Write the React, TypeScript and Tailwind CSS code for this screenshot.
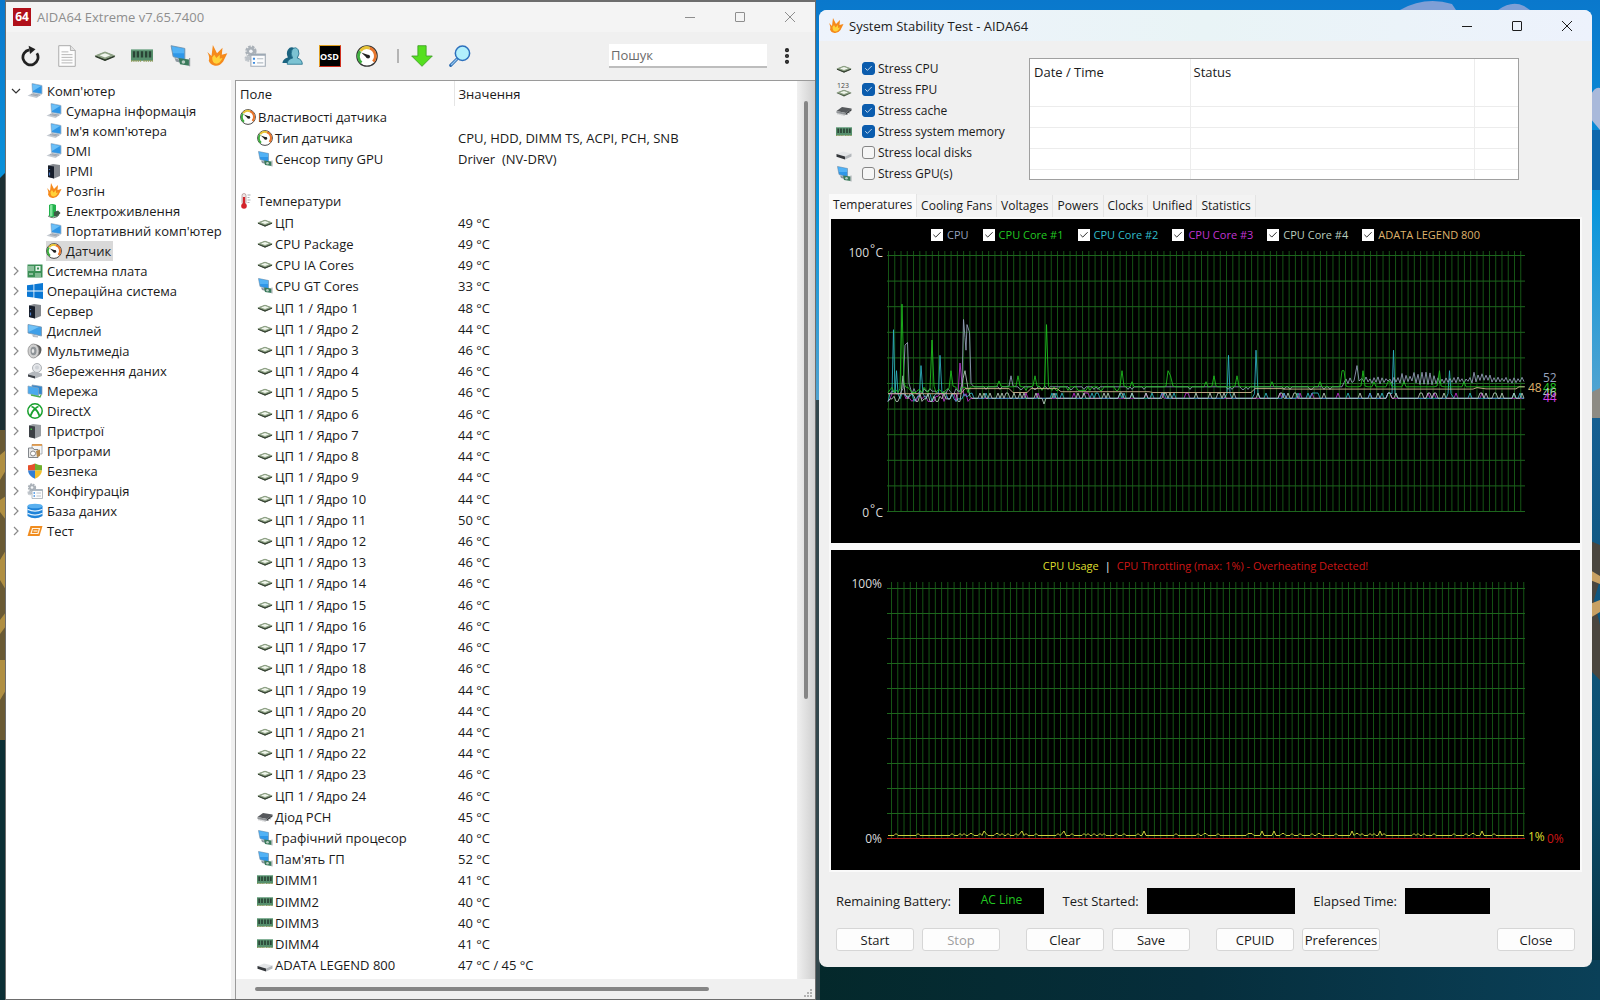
import React, {useState} from "react";
import {Check, MoreVertical} from "lucide-react";

type IconName =
    | 'laptop' | 'server' | 'flame' | 'battery' | 'gauge' | 'board' | 'windows' | 'display' | 'speaker'
    | 'storage' | 'network' | 'xbox' | 'tower' | 'programs' | 'shield' | 'config' | 'database' | 'bench'
    | 'gpu' | 'chip' | 'fpu' | 'pch' | 'ram' | 'drive' | 'thermo' | 'doc' | 'users' | 'update' | 'lens' | 'refresh';

const drawings: Record<IconName, React.ReactNode> = {
    laptop: (
        <>
            <path d="M5 0.500L15 2.500V11L5.500 9.500Z" fill="#2f96e6" stroke="#9fb4c8" strokeWidth="0.800"/>
            <path d="M5.500 1.200L14 3L6 8Z" fill="#6cc0f8"/>
            <path d="M5.500 10L15 11.500L9.500 15L0.500 12.800Z" fill="#c3c9d0"/>
            <path d="M4 11.500L11 13M6 10.800L13 12.200" stroke="#8f98a3" strokeWidth="0.700"/>
        </>
    ),
    server: (
        <>
            <path d="M2 2.500L7 1L14 2V13L8 15.500L2 14Z" fill="#85898f"/>
            <path d="M2 2.500L8 3.500V15.500L2 14Z" fill="#161d2a"/>
            <path d="M3.500 6v1M3.500 9.500v3" stroke="#4d7cc4" strokeWidth="1.200"/>
        </>
    ),
    flame: (
        <>
            <path d="M1 5L4 8L5 0L8 6L12 2L11.500 7L15.500 6L12.500 12Q10 15.500 6.500 15Q3 14.500 2 11.500Q3 9 1 5Z" fill="#f58a1c"/>
            <path d="M4.500 9L6 7L7.500 9.500L10 7L10 10L12 9.500Q10 14 7 13.500Q4.500 13 4.500 9Z" fill="#ffd23a"/>
        </>
    ),
    battery: (
        <>
            <path d="M3 2Q6 0 10 2V13Q6 15 3 13Z" fill="#22b14c"/>
            <path d="M4 2.500Q5.500 1.500 6.500 2V13H4Z" fill="#7fe39a"/>
            <path d="M8 9L12 7.500L14.500 10L11 14L8 13Z" fill="#3d5a45"/>
            <path d="M2 13Q8 17 13 12" stroke="#6f7f74" fill="none"/>
        </>
    ),
    gauge: (
        <>
            <circle cx="8" cy="8" r="7.400" fill="#fff" stroke="#333" strokeWidth="0.900"/>
            <path d="M4 12.800A6 6 0 0 1 3 4.500" fill="none" stroke="#3fae3f" strokeWidth="2"/>
            <path d="M3.200 4.200A6 6 0 0 1 10 2.300" fill="none" stroke="#e8c437" strokeWidth="2"/>
            <path d="M10 2.300A6 6 0 0 1 12.500 12" fill="none" stroke="#e8762c" strokeWidth="2"/>
            <path d="M3.800 5.500L9.500 7.500L8 9.500Z" fill="#222"/>
            <circle cx="8.800" cy="8.400" r="1.400" fill="#222"/>
        </>
    ),
    board: (
        <>
            <rect x="0.500" y="1.500" width="15" height="13" fill="#3b8f56"/>
            <path d="M2 3v5M4 3v5M6 3v5M2 11h4" stroke="#d9efdf" strokeWidth="1"/>
            <rect x="8.500" y="3" width="5" height="5" fill="#e6f3ea"/>
            <rect x="10" y="4.500" width="2" height="2" fill="#3b8f56"/>
            <path d="M8 11h6M8 13h6" stroke="#d9efdf" strokeWidth="0.900"/>
        </>
    ),
    windows: (
        <path
            d="M0 2.300L6.500 1.400V7.600H0ZM7.300 1.300L16 0V7.600H7.300ZM0 8.400H6.500V14.600L0 13.700ZM7.300 8.400H16V16L7.300 14.700Z"
            fill="#0b78d4"/>
    ),
    display: (
        <>
            <path d="M1 1.500L14.500 4V13L1 10Z" fill="#3f9fe8" stroke="#7b96ad" strokeWidth="0.800"/>
            <path d="M1.500 2L12 4L1.500 9Z" fill="#71c2f7"/>
            <path d="M5 11.500L11 13V14.500L6 14Z" fill="#b8bec6"/>
        </>
    ),
    speaker: (
        <>
            <path d="M7 1Q15 2 14.500 7Q14 13 6.500 15Z" fill="#5c5c5c"/>
            <ellipse cx="6.500" cy="8" rx="5.500" ry="7" fill="#cfcfcf" stroke="#8e8e8e" strokeWidth="0.800"/>
            <ellipse cx="6.500" cy="8" rx="3" ry="4.200" fill="#8f9498"/>
            <ellipse cx="6" cy="8" rx="1.300" ry="2" fill="#e8e8e8"/>
        </>
    ),
    storage: (
        <>
            <circle cx="10" cy="5" r="4.500" fill="#e5e7ea" stroke="#a5a9ae" strokeWidth="0.900"/>
            <circle cx="10" cy="4.500" r="2" fill="#cdd1d6"/>
            <path d="M1 11L6 8.500L15 10.500V13L8 15.500L1 13.500Z" fill="#b4b8bd"/>
            <path d="M1 11.500L8 13.300V15.500L1 13.500Z" fill="#3e4248"/>
        </>
    ),
    network: (
        <>
            <path d="M5 2L15 3.500V11.500L5 10Z" fill="#2f86cf" stroke="#7e9ab2" strokeWidth="0.700"/>
            <path d="M1 3L11.500 5V13L1 10.500Z" fill="#4aa9ee" stroke="#86a4bb" strokeWidth="0.700"/>
            <path d="M4 12L13 14L14 12" stroke="#4caf50" fill="none" strokeWidth="1.300"/>
        </>
    ),
    xbox: (
        <>
            <circle cx="8" cy="8" r="7.200" fill="#fff" stroke="#17a02c" strokeWidth="1.500"/>
            <path d="M3.500 13Q5 8 8 6Q11 8 12.500 13M4.500 3.500Q6.500 4 8 6Q9.500 4 11.500 3.500" fill="none"
                  stroke="#17a02c" strokeWidth="1.700"/>
        </>
    ),
    tower: (
        <>
            <path d="M2 2.500L6 1L14 2V13L8 15.500L2 14Z" fill="#9a9ea3"/>
            <path d="M2 2.500L8 3.500V15.500L2 14Z" fill="#3c4045"/>
            <rect x="3.500" y="5.500" width="1.500" height="1.500" fill="#45c745"/>
        </>
    ),
    programs: (
        <>
            <path d="M5 1.500H15V11H5Z" fill="#f4f6f8" stroke="#9aa1a9" strokeWidth="0.800"/>
            <path d="M5 2h10" stroke="#e0923a" strokeWidth="1.600"/>
            <path d="M1.500 5H6L7 6.500H11V14.500H1.500Z" fill="#e9e9e9" stroke="#767b80" strokeWidth="0.900"/>
            <circle cx="6" cy="10.500" r="2.500" fill="#fff" stroke="#888"/>
            <path d="M9 8L13 6.500V13L10 14Z" fill="#b98a4b"/>
        </>
    ),
    shield: (
        <>
            <path d="M8 0.500Q4.500 2.500 1 2.300V7.500H8Z" fill="#e5502b"/>
            <path d="M8 0.500Q11.500 2.500 15 2.300V7.500H8Z" fill="#6fae2d"/>
            <path d="M1 7.500Q1.500 13 8 15.700V7.500Z" fill="#2f7fd6"/>
            <path d="M15 7.500Q14.500 13 8 15.700V7.500Z" fill="#f3c02c"/>
        </>
    ),
    config: (
        <>
            <circle cx="5" cy="4.500" r="3" fill="#aab1b8" stroke="#aab1b8" strokeWidth="2.300" strokeDasharray="1.700 0.700"/>
            <circle cx="5" cy="4.500" r="1.300" fill="#f4f6f8"/>
            <circle cx="2.800" cy="9.800" r="1.700" fill="#bcc2c8" stroke="#bcc2c8" strokeWidth="1.500" strokeDasharray="1.100 0.500"/>
            <path d="M5 6.500H15.500V15.500H5Z" fill="#fbfcfd" stroke="#a4adb6" strokeWidth="0.800"/>
            <path d="M5 7.200H15.500" stroke="#9aa5b1" strokeWidth="1.200"/>
            <path d="M6.500 10h1.500M6.500 13h1.500" stroke="#3d8ce0" strokeWidth="1.300"/>
            <path d="M9.500 10h4.500M9.500 13h4.500" stroke="#b4bcc4" strokeWidth="0.900"/>
        </>
    ),
    database: (
        <>
            <path d="M0.500 3V13Q8 17.500 15.500 13V3Z" fill="#1f83d8"/>
            <ellipse cx="8" cy="3" rx="7.500" ry="2.300" fill="#5ab0ef"/>
            <path d="M0.500 6.300Q8 10 15.500 6.300M0.500 10.300Q8 14 15.500 10.300" stroke="#e4f2fd" fill="none" strokeWidth="1.200"/>
        </>
    ),
    bench: (
        <>
            <path d="M3.500 3H15.500L12.500 13H0.500Z" fill="#f08c1f"/>
            <path d="M5.500 5.500H12.500L11 10.500H4Z" fill="none" stroke="#fff3df" strokeWidth="1.200"/>
            <path d="M6.500 8h4" stroke="#fff3df" strokeWidth="1.200"/>
        </>
    ),
    gpu: (
        <>
            <path d="M1.500 0.500L11.500 2.500V11L3 8.500Z" fill="#2f97e8" stroke="#7797b0" strokeWidth="0.700"/>
            <path d="M2 1L11 2.800V6L3 6Z" fill="#52b2f5"/>
            <path d="M4 9.500L9 11V13L5 12Z" fill="#8b979f"/>
            <path d="M7 9.500L14.500 10.500V15L8 14Z" fill="#3b7a5c"/>
            <circle cx="10.500" cy="12.300" r="1.300" fill="#b7cdc1"/>
            <path d="M15 9.500V15.500" stroke="#8f979d" strokeWidth="0.800"/>
        </>
    ),
    chip: (
        <>
            <path d="M0.500 8L8 5L15.500 8L8 11.500Z" fill="#44563f"/>
            <path d="M0.500 7.600L8 4.800L15.500 7.600L8 10.300Z" fill="#8fa286"/>
            <path d="M4 7.500L8 6L12 7.500L8 9Z" fill="#f0f5ec"/>
            <path d="M1 8.300L8 11.200L15 8.300" fill="none" stroke="#2c382a" strokeWidth="0.900"/>
        </>
    ),
    fpu: (
        <>
            <text x="1" y="6" fontSize="7" fill="#444">123</text>
            <path d="M0.500 11L8 8L15.500 11L8 14.500Z" fill="#44563f"/>
            <path d="M0.500 10.500L8 7.800L15.500 10.500L8 13.300Z" fill="#8fa286"/>
            <path d="M4 10.400L8 8.900L12 10.400L8 12Z" fill="#f0f5ec"/>
        </>
    ),
    pch: (
        <>
            <path d="M0.500 8L6 4L15.500 5.500L10 10Z" fill="#56595c"/>
            <path d="M0.500 8L10 10V12L0.500 10Z" fill="#8c9093"/>
            <path d="M10 10L15.500 5.500V7.500L10 12Z" fill="#3a3d40"/>
            <path d="M2 9.500v2M4 10v2M6 10.500v2M8 11v2M11.500 10v2M13.500 8.500v2" stroke="#a8abad" strokeWidth="0.800"/>
        </>
    ),
    ram: (
        <>
            <rect x="0" y="3.500" width="16" height="8" fill="#568f6c"/>
            <path d="M0 11.500h7.500M9 11.500h7" stroke="#8d9a5c" strokeWidth="1.200" strokeDasharray="1 0.600"/>
            <path d="M2.200 4.500v4.500M5 4.500v4.500M8 4.500v4.500M11 4.500v4.500M13.800 4.500v4.500" stroke="#2a4436" strokeWidth="1.700"/>
            <path d="M0 3.500h16" stroke="#76a98b" strokeWidth="0.700"/>
        </>
    ),
    drive: (
        <>
            <path d="M0.500 9L7 6.500L15.500 8.500L9 11.500Z" fill="#e3e5e7"/>
            <path d="M0.500 9L9 11.500V14.500L0.500 11.800Z" fill="#33363a"/>
            <path d="M9 11.500L15.500 8.500V11.500L9 14.500Z" fill="#b3b7bb"/>
        </>
    ),
    thermo: (
        <>
            <rect x="2" y="0.500" width="4" height="11" rx="2" fill="#f1e4e4" stroke="#a88" strokeWidth="0.700"/>
            <path d="M4 4V12" stroke="#d3222a" strokeWidth="2.200"/>
            <circle cx="4" cy="13" r="2.800" fill="#d3222a"/>
            <path d="M7.500 2h3M7.500 4.500h2M7.500 7h3M7.500 9.500h2" stroke="#a3a7ab" strokeWidth="0.900"/>
        </>
    ),
    doc: (
        <>
            <path d="M2 0.500H10.500L14 4V15.500H2Z" fill="#fdfdfd" stroke="#a9a9a9" strokeWidth="0.700"/>
            <path d="M10.500 0.500V4H14" fill="#e3e3e3" stroke="#a9a9a9" strokeWidth="0.600"/>
            <path d="M4 5h5M4 7h8M4 9h8M4 11h8M4 13h8" stroke="#b5b5b5" strokeWidth="0.700"/>
        </>
    ),
    users: (
        <>
            <path d="M1 13Q1.500 10 5 9Q3.500 6 5 3.500Q7 0.500 10 2.500V13Z" fill="#1c6480"/>
            <path d="M4.500 14Q4.500 10.500 8.500 9.500Q6.500 6.500 8 3.500Q10.500 0.500 12.500 3.500Q14 6.500 11.800 9.500Q15.500 10.500 15.500 14Z"
                  fill="#7cc3d3" stroke="#23708c" strokeWidth="0.600"/>
        </>
    ),
    update: (
        <path d="M5 0.500H11V8H15.500L8 15.500L0.500 8H5Z" fill="#55df1f" stroke="#3c9c22" strokeWidth="0.600"/>
    ),
    lens: (
        <>
            <path d="M1.200 14.800L6 10" stroke="#2d6cb0" strokeWidth="2.200" strokeLinecap="round"/>
            <path d="M1.500 14.500L6 10" stroke="#8fc4f0" strokeWidth="0.900"/>
            <circle cx="9.800" cy="6" r="5.200" fill="#b2f0fc" stroke="#2d70bd" strokeWidth="1.100"/>
        </>
    ),
    refresh: (
        <>
            <path d="M13 6A5.500 5.500 0 1 1 7.500 3.500" fill="none" stroke="#222" strokeWidth="2"/>
            <path d="M7 0.500L12 3L8 6.500Z" fill="#222"/>
        </>
    ),
};

const Icon: React.FC<{ name: IconName; className?: string }> = ({name, className = "w-4 h-4"}) => (
    <svg viewBox="0 0 16 16" className={`${className} shrink-0`} aria-hidden="true">{drawings[name]}</svg>
);

interface TreeNode {
    label: string;
    icon: IconName;
    child?: boolean;
    open?: boolean;
}

const tree: TreeNode[] = [
    {label: "Комп'ютер", icon: 'laptop', open: true},
    {label: "Сумарна інформація", icon: 'laptop', child: true},
    {label: "Ім'я комп'ютера", icon: 'laptop', child: true},
    {label: "DMI", icon: 'laptop', child: true},
    {label: "IPMI", icon: 'server', child: true},
    {label: "Розгін", icon: 'flame', child: true},
    {label: "Електроживлення", icon: 'battery', child: true},
    {label: "Портативний комп'ютер", icon: 'laptop', child: true},
    {label: "Датчик", icon: 'gauge', child: true},
    {label: "Системна плата", icon: 'board'},
    {label: "Операційна система", icon: 'windows'},
    {label: "Сервер", icon: 'server'},
    {label: "Дисплей", icon: 'display'},
    {label: "Мультимедіа", icon: 'speaker'},
    {label: "Збереження даних", icon: 'storage'},
    {label: "Мережа", icon: 'network'},
    {label: "DirectX", icon: 'xbox'},
    {label: "Пристрої", icon: 'tower'},
    {label: "Програми", icon: 'programs'},
    {label: "Безпека", icon: 'shield'},
    {label: "Конфігурація", icon: 'config'},
    {label: "База даних", icon: 'database'},
    {label: "Тест", icon: 'bench'},
];

interface SensorRow {
    label: string;
    value?: string;
    icon?: IconName;
    group?: boolean;
}

const coreTemps = [48, 44, 46, 46, 46, 46, 44, 44, 44, 44, 50, 46, 46, 46, 46, 46, 46, 46, 44, 44, 44, 44, 46, 46];

const sensors: SensorRow[] = [
    {label: "Властивості датчика", icon: 'gauge', group: true},
    {label: "Тип датчика", icon: 'gauge', value: "CPU, HDD, DIMM TS, ACPI, PCH, SNB"},
    {label: "Сенсор типу GPU", icon: 'gpu', value: "Driver  (NV-DRV)"},
    {label: ""},
    {label: "Температури", icon: 'thermo', group: true},
    {label: "ЦП", icon: 'chip', value: "49 °C"},
    {label: "CPU Package", icon: 'chip', value: "49 °C"},
    {label: "CPU IA Cores", icon: 'chip', value: "49 °C"},
    {label: "CPU GT Cores", icon: 'gpu', value: "33 °C"},
    ...coreTemps.map((t, i): SensorRow => ({label: `ЦП 1 / Ядро ${i + 1}`, icon: 'chip', value: `${t} °C`})),
    {label: "Діод PCH", icon: 'pch', value: "45 °C"},
    {label: "Графічний процесор", icon: 'gpu', value: "40 °C"},
    {label: "Пам'ять ГП", icon: 'gpu', value: "52 °C"},
    {label: "DIMM1", icon: 'ram', value: "41 °C"},
    {label: "DIMM2", icon: 'ram', value: "40 °C"},
    {label: "DIMM3", icon: 'ram', value: "40 °C"},
    {label: "DIMM4", icon: 'ram', value: "41 °C"},
    {label: "ADATA LEGEND 800", icon: 'drive', value: "47 °C / 45 °C"},
];

const WindowControls = () => (
    <div className="flex h-full">
        <button aria-label="Minimize" className="w-[50px] h-full flex items-center justify-center">
            <svg viewBox="0 0 10 10" className="w-[10px] h-[10px]"><path d="M0 5.500H10" stroke="currentColor"/></svg>
        </button>
        <button aria-label="Maximize" className="w-[50px] h-full flex items-center justify-center">
            <svg viewBox="0 0 10 10" className="w-[10px] h-[10px]">
                <rect x="0.500" y="0.500" width="9" height="9" rx="0.500" fill="none" stroke="currentColor"/>
            </svg>
        </button>
        <button aria-label="Close" className="w-[50px] h-full flex items-center justify-center">
            <svg viewBox="0 0 10 10" className="w-[10px] h-[10px]">
                <path d="M0 0L10 10M10 0L0 10" stroke="currentColor" fill="none"/>
            </svg>
        </button>
    </div>
);

const Toolbar = () => {
    const tools: IconName[] = ['refresh', 'doc', 'chip', 'ram', 'gpu', 'flame', 'config', 'users'];
    return (
        <div className="h-12 flex items-center pl-[13px] pr-[18px]">
            <div className="w-[359px] flex items-center justify-between">
                {tools.map(tool => (
                    <button key={tool} aria-label={tool}><Icon name={tool} className="w-[22px] h-[22px]"/></button>
                ))}
                <button
                    aria-label="On-screen display"
                    className="w-[22px] h-[22px] bg-black border border-[#e0a020] border-b-[#d03020] border-r-[#d03020] text-white text-[9px] font-bold leading-none">
                    OSD
                </button>
                <button aria-label="Sensors"><Icon name="gauge" className="w-[22px] h-[22px]"/></button>
            </div>
            <div className="w-[2px] h-[14px] bg-[#b4b4b4] ml-[19px] mr-3"/>
            <button aria-label="Update"><Icon name="update" className="w-[22px] h-[22px]"/></button>
            <button aria-label="Find" className="ml-4"><Icon name="lens" className="w-[22px] h-[22px]"/></button>
            <input
                type="text"
                aria-label="Пошук"
                placeholder="Пошук"
                className="ml-auto w-[158px] h-6 px-[2px] bg-white border-b-2 border-[#bdbdbd] outline-none placeholder:text-[#6b6b6b]"
            />
            <button aria-label="Menu" className="ml-[10px] text-[#222]">
                <MoreVertical className="w-5 h-5" strokeWidth={3}/>
            </button>
        </div>
    );
};

const NavTree = () => (
    <ul className="w-[225px] shrink-0 bg-white pt-[1px]">
        {tree.map(node => (
            <li key={node.label} className={`h-5 flex items-center ${node.child ? 'pl-[40px]' : 'pl-[5px]'}`}>
                {!node.child && (
                    <svg viewBox="0 0 10 10" className="w-[10px] h-[10px] mr-[6px]" aria-hidden="true">
                        <path d={node.open ? "M1 3L5 7L9 3" : "M3 1L7 5L3 9"} fill="none"
                              stroke={node.open ? "#333" : "#8a8a8a"} strokeWidth="1.200"/>
                    </svg>
                )}
                <a href="#" className={`flex items-center h-5 pr-[2px] whitespace-nowrap ${node.label === 'Датчик' ? 'bg-[#d9d9d9]' : ''}`}>
                    <Icon name={node.icon}/>
                    <span className="pl-1">{node.label}</span>
                </a>
            </li>
        ))}
    </ul>
);

const SensorList = () => (
    <div className="flex-1 min-w-0 flex flex-col border-l border-t border-[#9a9a9a] bg-[#f0f0f0]">
        <div className="flex-1 flex">
            <div className="flex-1 min-w-0 bg-white pb-[2px]">
                <table className="w-full h-[895px] table-fixed border-collapse">
                    <thead>
                    <tr className="h-[25px] text-left">
                        <th className="w-[218px] font-normal pl-1 py-0 border-r border-[#e5e5e5]">Поле</th>
                        <th className="font-normal pl-1 py-0">Значення</th>
                    </tr>
                    </thead>
                    <tbody>
                    {sensors.map((row, index) => (
                        <tr key={index} className="leading-[20px]">
                            <td className={`p-0 ${row.group ? 'pl-1' : 'pl-[21px]'}`}>
                                <div className="flex items-center h-5 gap-[2px] whitespace-nowrap">
                                    {row.icon && <Icon name={row.icon}/>}
                                    <span>{row.label}</span>
                                </div>
                            </td>
                            <td className="p-0 pl-1 whitespace-pre">{row.value}</td>
                        </tr>
                    ))}
                    </tbody>
                </table>
            </div>
            <div className="w-[18px] shrink-0 bg-linear-to-r from-[#f0f0f0] to-[#cfcfcf] pt-5 flex flex-col items-center">
                <div className="w-1 h-[598px] rounded bg-[#858585]"/>
            </div>
        </div>
        <div className="h-5 flex items-center justify-between pl-[19px] pr-[3px] bg-[#f0f0f0]">
            <div className="w-5/6 max-w-[454px] h-1 rounded bg-[#858585]"/>
            <svg viewBox="0 0 8 8" className="w-2 h-2 self-end mb-[2px]" aria-hidden="true">
                <path d="M6 0h2v2h-2zM3 3h2v2h-2zM6 3h2v2h-2zM0 6h2v2h-2zM3 6h2v2h-2zM6 6h2v2h-2z" fill="#b3b3b3"/>
            </svg>
        </div>
    </div>
);

const MainWindow = () => (
    <section className="flex flex-col min-w-0 bg-[#f0f0f0] border border-t-2 border-[#6d6d6d]">
        <header className="h-[30px] flex items-center bg-[#f4f4f4] text-[#8e8e8e]">
            <span className="ml-[7px] w-[18px] h-[18px] bg-[#b0101a] text-white text-[12px] font-bold leading-[18px] text-center">64</span>
            <h1 className="ml-[6px] flex-1">AIDA64 Extreme v7.65.7400</h1>
            <WindowControls/>
        </header>
        <Toolbar/>
        <div className="flex-1 flex gap-1">
            <NavTree/>
            <SensorList/>
        </div>
    </section>
);

const stressTests: { label: string; icon: IconName; on: boolean }[] = [
    {label: "Stress CPU", icon: 'chip', on: true},
    {label: "Stress FPU", icon: 'fpu', on: true},
    {label: "Stress cache", icon: 'pch', on: true},
    {label: "Stress system memory", icon: 'ram', on: true},
    {label: "Stress local disks", icon: 'drive', on: false},
    {label: "Stress GPU(s)", icon: 'gpu', on: false},
];

const StressOption: React.FC<{ label: string; icon: IconName; on: boolean }> = ({label, icon, on}) => (
    <div className="h-[21px] flex items-center">
        <Icon name={icon}/>
        <label className="flex items-center ml-[10px]">
            <span className="relative flex">
                <input type="checkbox" defaultChecked={on}
                       className="peer appearance-none w-[13px] h-[13px] rounded-[3px] border border-[#858585] bg-[#f6f6f6] checked:bg-[#0b5cad] checked:border-[#0b5cad]"/>
                <Check className="absolute left-[2px] top-[2px] w-[9px] h-[9px] text-white opacity-0 peer-checked:opacity-100 pointer-events-none"/>
            </span>
            <span className="pl-[3px] text-xs whitespace-nowrap">{label}</span>
        </label>
    </div>
);

// Small deterministic generator so the graphs look the same on each load
const makeRandom = (seed: number) => () => {
    seed = (seed * 16807) % 2147483647;
    return seed / 2147483647;
};

type Point = [number, number];

const graphStart = 57;
const graphEnd = 694;

const buildSeries = (seed: number, level: (x: number, rnd: () => number) => number, spikes: Point[]): Point[] => {
    const rnd = makeRandom(seed);
    const points: Point[] = [];
    for (let x = graphStart; x <= graphEnd; x += 2) {
        const value = level(x, rnd);
        if (!spikes.some(s => Math.abs(s[0] - x) < 2)) {
            points.push([x, value]);
        }
    }
    return [...points, ...spikes].sort((a, b) => a[0] - b[0]);
};

const toPath = (points: Point[], zeroY: number, scale: number) =>
    points.map(([x, v]) => `${x},${(zeroY - v * scale).toFixed(1)}`).join(' ');

// Cores idle noisily before the load settles, around x = 138
const coreLevel = (bump: number) => (x: number, rnd: () => number) => {
    const r = rnd();
    if (x < 140) return 43 + Math.floor(r * 4);
    return r < bump ? 46.300 : 44.200;
};

const temperatureLines = [
    {
        color: "#c02fd0",
        points: buildSeries(41, coreLevel(0.05), [[127, 46], [129, 58], [131, 50], [152, 44.200]]),
    },
    {
        color: "#2fb4c4",
        points: buildSeries(7, coreLevel(0.12), [
            [61, 46], [62.500, 71], [64, 46], [65.500, 55], [67, 46], [88.500, 46], [90, 57], [92, 46],
            [107.500, 46], [109, 61], [111, 46], [396, 46], [397.500, 61], [399, 46], [423.500, 46], [425, 63],
            [427, 46], [561, 46], [562.500, 63], [564, 46], [617, 46], [618.500, 55], [620, 46],
        ]),
    },
    {
        color: "#b9cdbf",
        points: buildSeries(19, coreLevel(0.2), [[70, 46], [72, 53], [74, 46], [132, 52], [134, 55], [137, 48], [211, 44.200], [213, 42], [215, 44.200]]),
    },
    {
        color: "#97a2bd",
        points: buildSeries(23, (x, rnd) => {
            const r = rnd();
            if (x < 130) return 46 + Math.floor(r * 3);
            if (x > 512) {
                // Zigzags on every sample once the load is on, taller in two bursts
                const burst = (x > 570 && x < 605) || (x > 642 && x < 662);
                return (burst ? 52 : 51.300) + ((x - graphStart) / 2 % 2 ? 1 : -1) * (burst ? 1.800 : 1) * (0.400 + r);
            }
            return r < 0.2 ? 47.700 : 48.700;
        }, [
            [72, 48], [74, 65], [76.500, 66], [78, 50], [131, 50], [132.500, 75], [134, 68], [135, 63], [136, 73],
            [138.500, 70], [140, 50], [178, 49], [180, 53], [182, 49], [523, 51], [526, 57], [528, 51],
        ]),
    },
    {
        color: "#1fc31f",
        points: buildSeries(5, (x, rnd) => {
            const r = rnd();
            if (x < 140) return 46.500 + Math.floor(r * 3);
            if (x > 190 && x < 290) return r < 0.4 ? 47.300 : 48.700;
            return r < 0.04 ? 50.700 : 48.700;
        }, [
            [69, 48], [71, 81], [73, 50], [99, 48], [101, 67], [103, 49], [118, 48], [120, 55], [122, 49],
            [166, 49], [168, 51], [170, 49], [185, 49], [187, 53], [189, 49], [202, 49], [204, 53], [206, 49],
            [213.500, 49], [215.500, 73], [217.500, 49], [289, 49], [291, 55], [293, 49], [335, 49], [337, 55],
            [339.500, 53], [342, 49], [381, 49], [383, 53], [385, 49], [404, 49], [406, 53], [408, 49],
            [509, 49], [511, 55], [513, 55], [515, 49], [530, 49], [532, 55], [534, 49], [606, 49],
            [608.500, 55], [610, 49],
        ]),
    },
    {
        color: "#d9bd98",
        points: [
            [57, 46], [130, 46], [134, 48], [178, 48], [182, 46.500], [196, 46.500], [200, 48], [226, 48],
            [230, 46.800], [318, 46.800], [322, 46.500], [420, 46.500], [424, 48], [450, 48], [454, 47.800],
            [642, 47.800], [646, 48.400], [655, 47.900], [685, 47.900], [688, 48.700], [694, 48.700],
        ] as Point[],
    },
];

const usagePoints = buildSeries(11, (_x, rnd) => {
    const r = rnd();
    if (r > 0.98) return 3;
    if (r > 0.8) return 2;
    return 1.200;
}, []);

const columns = Array.from({length: 102}, (_, i) => i);
const rows = Array.from({length: 11}, (_, i) => i);

const Grid: React.FC<{ left: number; top: number; bottom: number }> = ({left, top, bottom}) => (
    <g strokeWidth="1">
        {columns.map(i => (
            <line key={i} x1={left + i * 6.260} x2={left + i * 6.260} y1="0" y2={bottom} stroke="#155415"/>
        ))}
        {rows.map(i => {
            const y = top + i * (bottom - top) / 10;
            return <line key={i} x1="56" x2={graphEnd} y1={y} y2={y} stroke="#1d651d"/>;
        })}
    </g>
);

const legend = [
    {label: "CPU", color: "text-[#97a2bd]"},
    {label: "CPU Core #1", color: "text-[#22c822]"},
    {label: "CPU Core #2", color: "text-[#30bcca]"},
    {label: "CPU Core #3", color: "text-[#c234d4]"},
    {label: "CPU Core #4", color: "text-[#b9cdbf]"},
    {label: "ADATA LEGEND 800", color: "text-[#dfb26c]"},
];

const TemperatureGraph = () => (
    <div className="bg-black">
        <div className="h-8 flex items-center justify-center gap-[14px] text-[11px]">
            {legend.map(item => (
                <label key={item.label} className="flex items-center whitespace-nowrap">
                    <span className="relative flex">
                        <input type="checkbox" defaultChecked className="peer appearance-none w-3 h-3 bg-white"/>
                        <Check className="absolute left-[1px] top-[1px] w-[10px] h-[10px] text-black opacity-0 peer-checked:opacity-100 pointer-events-none"/>
                    </span>
                    <span className={`pl-1 ${item.color}`}>{item.label}</span>
                </label>
            ))}
        </div>
        <svg viewBox="0 0 749 292" className="block w-full overflow-visible text-xs">
            <Grid left={57.500} top={4.500} bottom={260.500}/>
            {temperatureLines.map(line => (
                <polyline key={line.color} points={toPath(line.points, 260.500, 2.560)} fill="none"
                          stroke={line.color} strokeWidth="1" strokeOpacity="0.850"/>
            ))}
            <g fill="#dcdcdc">
                <text x="38" y="6" textAnchor="end">100</text>
                <text x="39" y="2">°</text>
                <text x="52" y="6" textAnchor="end">C</text>
                <text x="38" y="266" textAnchor="end">0</text>
                <text x="39" y="262">°</text>
                <text x="52" y="266" textAnchor="end">C</text>
            </g>
            <text x="697" y="141" fill="#dfb26c">48</text>
            <text x="712" y="131" fill="#97a2bd">52</text>
            <text x="712" y="141" fill="#22c822">48</text>
            <text x="712" y="146" fill="#b9cdbf">46</text>
            <text x="712" y="151" fill="#d23ce4">44</text>
        </svg>
    </div>
);

const UsageGraph = () => (
    <div className="bg-black">
        <div className="h-8 flex items-center justify-center gap-[6px] text-[11px]">
            <span className="text-[#dede2e]">CPU Usage</span>
            <span className="text-white">|</span>
            <span className="text-[#cc1616]">CPU Throttling (max: 1%) - Overheating Detected!</span>
        </div>
        <svg viewBox="0 0 749 288" className="block w-full overflow-visible text-xs">
            <Grid left={60.500} top={6.500} bottom={256.500}/>
            <line x1="56" x2="694" y1="256.500" y2="256.500" stroke="#b01818"/>
            <polyline points={toPath(usagePoints, 256.500, 2.500)} fill="none" stroke="#cfcf3c" strokeWidth="1"/>
            <text x="51" y="6" textAnchor="end" fill="#dcdcdc">100%</text>
            <text x="51" y="261" textAnchor="end" fill="#dcdcdc">0%</text>
            <text x="697" y="259" fill="#dede2e">1%</text>
            <text x="716" y="261" fill="#cc1616">0%</text>
        </svg>
    </div>
);

const tabs = ["Temperatures", "Cooling Fans", "Voltages", "Powers", "Clocks", "Unified", "Statistics"];

const StabilityWindow = () => {
    const [activeTab, setActiveTab] = useState("Temperatures");

    return (
        <section className="self-start min-w-0 mt-[10px] rounded-lg overflow-hidden bg-[#f0f0f0]">
            <header className="h-[31px] flex items-center bg-linear-to-r from-[#eef3fc] via-[#e9f4f6] to-[#edf2fc] text-[#1c1c1c]">
                <Icon name="flame" className="w-4 h-4 ml-[9px]"/>
                <h2 className="ml-[5px] flex-1">System Stability Test - AIDA64</h2>
                <WindowControls/>
            </header>

            <div className="pl-[17px] pr-[73px] pt-[17px] flex justify-between">
                <div>
                    {stressTests.map(test => <StressOption key={test.label} {...test}/>)}
                </div>
                <div className="w-[490px] h-[122px] overflow-hidden bg-white border border-[#a0a0a0]">
                    <table className="w-full table-fixed border-collapse">
                        <thead>
                        <tr className="h-[26px] text-left">
                            <th className="w-[160px] font-normal p-0 pl-1 border-r border-[#ececec]">Date / Time</th>
                            <th className="w-[284px] font-normal p-0 pl-[3px] border-r border-[#ececec]">Status</th>
                            <th/>
                        </tr>
                        </thead>
                        <tbody>
                        {[0, 1, 2, 3, 4].map(i => (
                            <tr key={i} className="h-[21px] border-b border-[#ececec]">
                                <td className="border-r border-[#ececec]"/>
                                <td className="border-r border-[#ececec]"/>
                                <td/>
                            </tr>
                        ))}
                        </tbody>
                    </table>
                </div>
            </div>

            <div className="px-[10px] pt-[10px]">
                <div role="tablist" className="flex h-[23px] items-end text-xs">
                    {tabs.map(tab => (
                        <button
                            key={tab}
                            role="tab"
                            aria-selected={activeTab === tab}
                            onClick={() => setActiveTab(tab)}
                            className={`whitespace-nowrap px-1 border-r border-[#e4e4e4] ${activeTab === tab ? 'h-[23px] pb-[2px] bg-[#fafafa]' : 'h-[22px] bg-[#f3f3f3]'}`}
                        >
                            {tab}
                        </button>
                    ))}
                </div>
                <div className="bg-[#fafafa] p-[2px] flex flex-col gap-[7px]">
                    <TemperatureGraph/>
                    <UsageGraph/>
                </div>
            </div>

            <div className="pl-[17px] pr-[102px] mt-4 flex items-center justify-between">
                <div className="flex items-center gap-2">
                    <span>Remaining Battery:</span>
                    <output className="w-[85px] h-[26px] leading-[24px] text-center bg-black text-[#22c822] text-xs">AC Line</output>
                </div>
                <div className="flex items-center gap-2">
                    <span>Test Started:</span>
                    <output className="w-[148px] h-[26px] bg-black"/>
                </div>
                <div className="flex items-center gap-2">
                    <span>Elapsed Time:</span>
                    <output className="w-[85px] h-[26px] bg-black"/>
                </div>
            </div>

            <div className="px-[17px] mt-[14px] mb-4 flex gap-2 *:w-[78px] *:h-[23px] *:bg-[#fdfdfd] *:border *:border-[#d6d6d6] *:rounded-[3px]">
                <button>Start</button>
                <button disabled className="text-[#9d9d9d]">Stop</button>
                <button className="ml-[18px]">Clear</button>
                <button>Save</button>
                <button className="ml-[18px]">CPUID</button>
                <button>Preferences</button>
                <button className="ml-auto">Close</button>
            </div>
        </section>
    );
};

// Desktop wallpaper: sky, headland and sea, visible around the windows
const Wallpaper = () => (
    <svg viewBox="0 0 1600 1000" preserveAspectRatio="none" className="absolute inset-0 w-full h-full -z-10" aria-hidden="true">
        <defs>
            <linearGradient id="sky" x1="0" y1="0" x2="0" y2="1">
                <stop offset="0" stopColor="#0a78cc"/>
                <stop offset="0.500" stopColor="#0a96dc"/>
                <stop offset="1" stopColor="#5aa5cf"/>
            </linearGradient>
            <linearGradient id="sea" x1="0" y1="0" x2="0" y2="1">
                <stop offset="0" stopColor="#155f92"/>
                <stop offset="0.600" stopColor="#0c4f6e"/>
                <stop offset="1" stopColor="#07303f"/>
            </linearGradient>
            <linearGradient id="deep" x1="0" y1="0" x2="1" y2="0">
                <stop offset="0" stopColor="#04282a"/>
                <stop offset="0.500" stopColor="#062e3c"/>
                <stop offset="1" stopColor="#0a4058"/>
            </linearGradient>
        </defs>
        <rect width="1600" height="420" fill="url(#sky)"/>
        <rect y="415" width="1600" height="585" fill="url(#sea)"/>
        <rect x="800" y="960" width="800" height="40" fill="url(#deep)"/>
        <path d="M1400 10Q1425 -4 1452 4L1456 10ZM1498 10Q1512 0 1524 6L1530 10Z" fill="#7f9fd6"/>
        <path d="M1590 96Q1595 86 1600 88V130L1590 118Z" fill="#a9b9da"/>
        <path d="M1590 130H1600V190H1590Z" fill="#0e66ac"/>
        <path d="M1588 394L1600 388V418H1588Z" fill="#8d8b84"/>
        <path d="M1588 540L1600 545V580L1594 600L1600 625V680L1588 668Z" fill="#4a463f"/>
        <path d="M1590 570L1600 576V584L1590 580ZM1590 604L1600 600V612L1590 618Z" fill="#c9a163"/>
        <path d="M0 178L6 172V460H0Z" fill="#1d2f33"/>
        <path d="M0 430H6V760H0Z" fill="#6a5a34"/>
        <path d="M0 455L6 450V470L0 480ZM0 500L6 496V520L0 512ZM0 560L6 550V590L0 580ZM0 620L6 612V626L0 634ZM0 660H6V690L0 700Z" fill="#b08f42"/>
        <path d="M0 740H6V1000H0Z" fill="#0c2f35"/>
        <path d="M816 400H820V1000H816Z" fill="#33474c"/>
    </svg>
);

const App: React.FC = () => (
    <main
        className="relative isolate min-h-screen grid grid-cols-[811fr_773fr] gap-[3px] pl-[5px] pr-[8px] text-[13px] leading-[18px] text-[#1a1a1a] font-['Open_Sans','Noto_Sans',sans-serif]">
        <Wallpaper/>
        <MainWindow/>
        <StabilityWindow/>
    </main>
);

export default App;
